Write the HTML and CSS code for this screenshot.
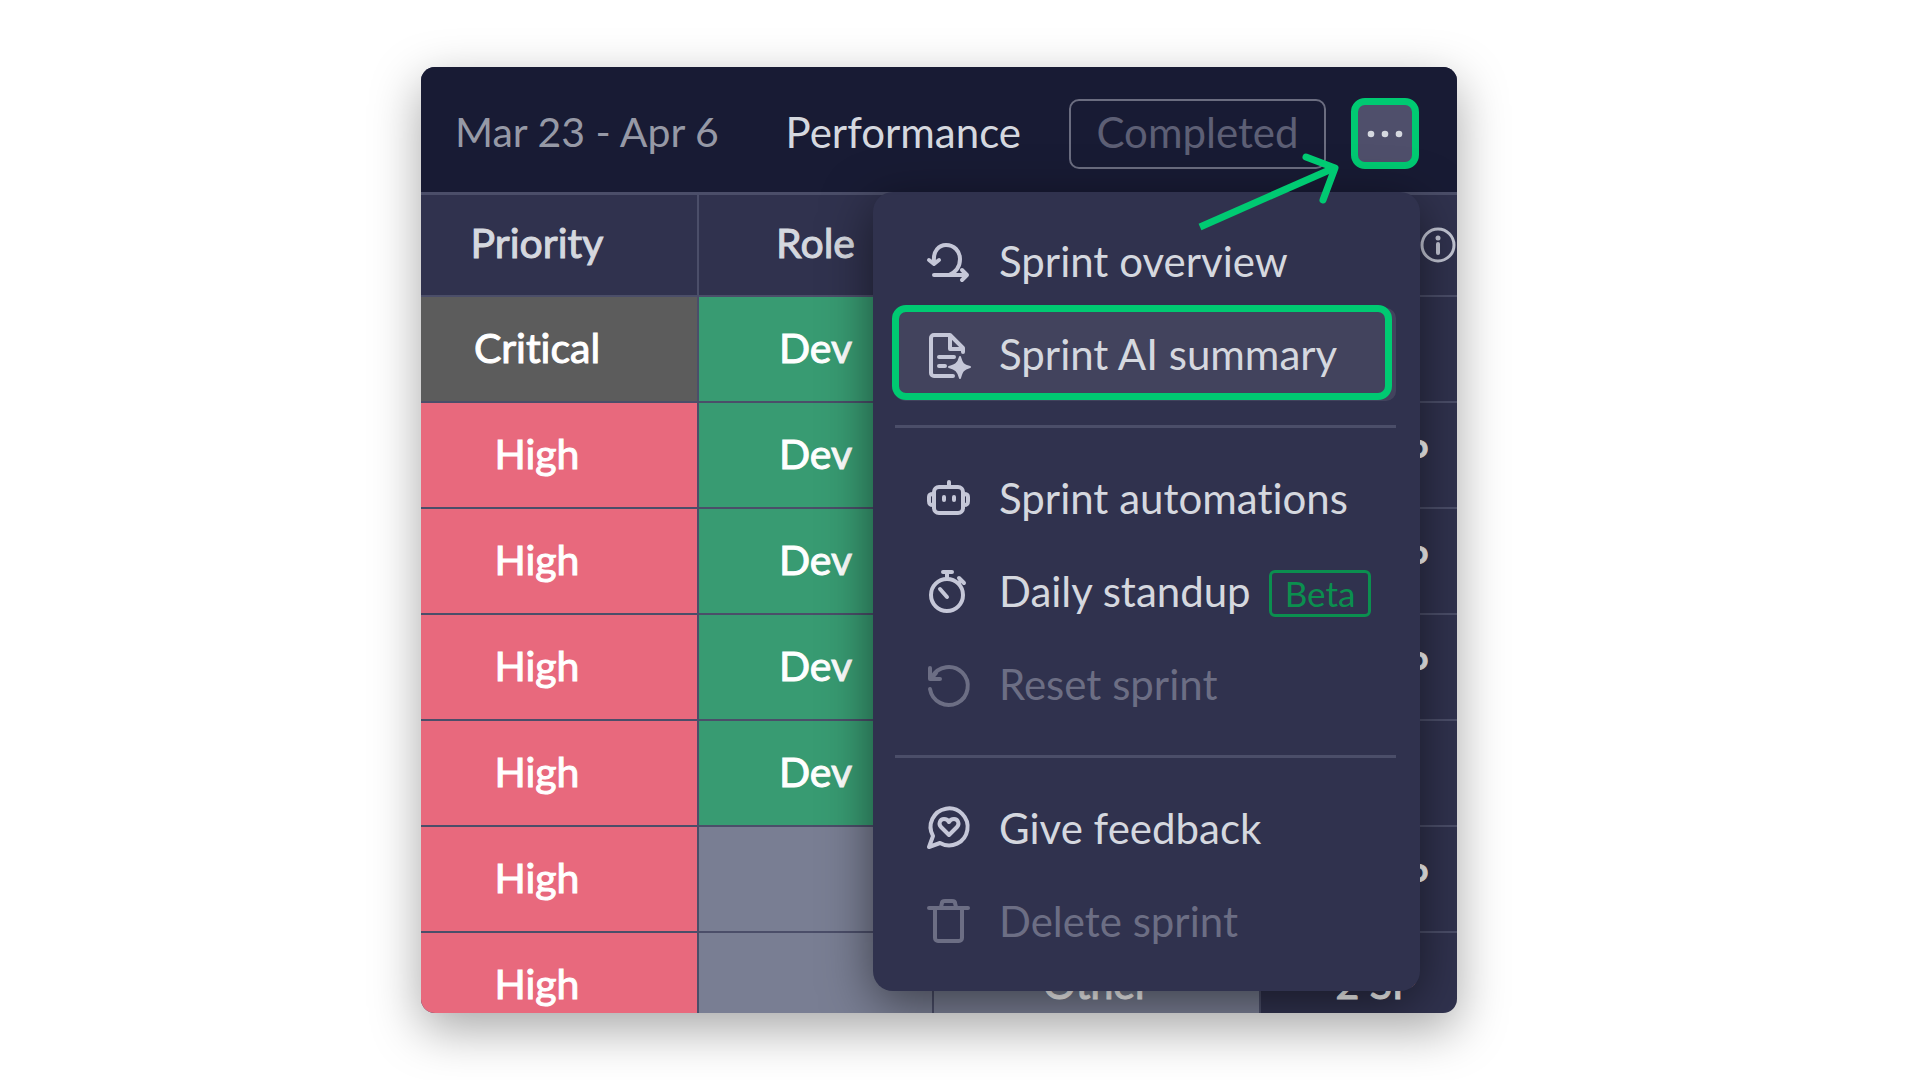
FILE: index.html
```html
<!DOCTYPE html>
<html lang="en">
<head>
    <meta charset="UTF-8">
    <meta name="viewport" content="width=device-width, initial-scale=1.0">
    <title>Sprint menu</title>
    <link rel="stylesheet" href="styles.css">
</head>
<body>
    <main class="card">
        <header class="topbar">
            <span class="dates">Mar 23 - Apr 6</span>
            <a href="#" class="performance">Performance</a>
            <button type="button" class="completed-btn" disabled>Completed</button>
            <button type="button" class="more-btn" id="moreBtn" aria-label="More options" aria-expanded="true" aria-controls="sprintMenu">
                <svg width="36" height="10" viewBox="0 0 36 10" fill="currentColor">
                    <circle cx="4" cy="5" r="3.300"/>
                    <circle cx="18" cy="5" r="3.300"/>
                    <circle cx="32" cy="5" r="3.300"/>
                </svg>
            </button>
        </header>

        <table class="board">
            <colgroup>
                <col class="col-priority">
                <col class="col-role">
                <col class="col-type">
                <col class="col-points">
            </colgroup>
            <thead>
                <tr>
                    <th class="priority">Priority</th>
                    <th>Role</th>
                    <th></th>
                    <th class="points">
                        <svg class="info" width="36" height="36" viewBox="0 0 36 36" fill="none" stroke="currentColor" stroke-width="3">
                            <circle cx="18" cy="18" r="16"/>
                            <path d="M18 17v9" stroke-width="4" stroke-linecap="round"/>
                            <circle cx="18" cy="11" r="2.500" fill="currentColor" stroke="none"/>
                        </svg>
                    </th>
                </tr>
            </thead>
            <tbody>
                <tr><td class="priority critical">Critical</td><td class="dev">Dev</td><td class="other"></td><td></td></tr>
                <tr><td class="priority high">High</td><td class="dev">Dev</td><td class="other"></td><td>13 SP</td></tr>
                <tr><td class="priority high">High</td><td class="dev">Dev</td><td class="other"></td><td>13 SP</td></tr>
                <tr><td class="priority high">High</td><td class="dev">Dev</td><td class="other"></td><td>20 SP</td></tr>
                <tr><td class="priority high">High</td><td class="dev">Dev</td><td class="other"></td><td></td></tr>
                <tr><td class="priority high">High</td><td class="other"></td><td class="other"></td><td>20 SP</td></tr>
                <tr><td class="priority high">High</td><td class="other"></td><td class="other">Other</td><td>2 SP</td></tr>
            </tbody>
        </table>

        <!-- Sprint menu -->
        <nav class="menu" id="sprintMenu">
            <button type="button" class="menu-item">
                <svg class="icon" viewBox="0 0 42 42" fill="none" stroke="currentColor" stroke-width="4" stroke-linecap="round" stroke-linejoin="round">
                    <path d="M7 21C6 11 12 5 19 5c8 0 14 6 14 14 0 7-4 13-11 16"/>
                    <path d="M2 20l5 4 5-4"/>
                    <path d="M7 35h32M35 30l5 5-5 5"/>
                </svg>
                <span>Sprint overview</span>
            </button>
            <button type="button" class="menu-item active">
                <svg class="icon" viewBox="0 0 42 42" fill="none" stroke="currentColor" stroke-width="4" stroke-linecap="round" stroke-linejoin="round">
                    <path d="M26 43H7a3 3 0 0 1-3-3V5a3 3 0 0 1 3-3h16l13 13v4"/>
                    <path d="M23 3v13h12"/>
                    <path d="M12 24h15M12 33h6"/>
                    <path d="M33 24c2 7 3 8 10 10-7 2-8 4-10 11-2-7-4-9-11-11 7-2 9-3 11-10z" fill="currentColor" stroke-width="2"/>
                </svg>
                <span>Sprint AI summary</span>
            </button>
            <hr class="divider">
            <button type="button" class="menu-item">
                <svg class="icon" viewBox="0 0 42 42" fill="none" stroke="currentColor" stroke-width="4" stroke-linecap="round" stroke-linejoin="round">
                    <rect x="7" y="10" width="29" height="26" rx="5"/>
                    <path d="M22 5v4M17 20v3M27 20v3"/>
                    <path d="M6 17c-3 0-4 1-4 3v4c0 3 1 4 4 4M37 17c3 0 4 1 4 3v4c0 3-1 4-4 4"/>
                </svg>
                <span>Sprint automations</span>
            </button>
            <button type="button" class="menu-item">
                <svg class="icon" viewBox="0 0 42 42" fill="none" stroke="currentColor" stroke-width="4" stroke-linecap="round" stroke-linejoin="round">
                    <circle cx="20" cy="25" r="16"/>
                    <path d="M16 2h9M20 2v6M13 19l7 8"/>
                    <path d="M32 8l5 5M34 10l-2 3"/>
                </svg>
                <span>Daily standup</span>
                <span class="beta">Beta</span>
            </button>
            <button type="button" class="menu-item" disabled>
                <svg class="icon" viewBox="0 0 42 42" fill="none" stroke="currentColor" stroke-width="4" stroke-linecap="round" stroke-linejoin="round">
                    <path d="M3 26A19 19 0 1 0 5 14"/>
                    <path d="M3 5v11h10M4 16l5-6"/>
                </svg>
                <span>Reset sprint</span>
            </button>
            <hr class="divider">
            <button type="button" class="menu-item">
                <svg class="icon" viewBox="0 0 42 42" fill="none" stroke="currentColor" stroke-width="4" stroke-linecap="round" stroke-linejoin="round">
                    <path d="M6 29A18.500 18.500 0 1 1 13 36L2 40z"/>
                    <path d="M22 28l-8-8c-3-3-1-8 3-8 2 0 4 1 5 3 1-2 3-3 5-3 4 0 6 5 3 8z"/>
                </svg>
                <span>Give feedback</span>
            </button>
            <button type="button" class="menu-item" disabled>
                <svg class="icon" viewBox="0 0 42 42" fill="none" stroke="currentColor" stroke-width="4" stroke-linecap="round" stroke-linejoin="round">
                    <path d="M2 8h39M8 8v30a3 3 0 0 0 3 3h21a3 3 0 0 0 3-3V8"/>
                    <path d="M14 7l1-4c0-1 1-2 3-2h7c2 0 3 1 3 2l1 4"/>
                </svg>
                <span>Delete sprint</span>
            </button>
        </nav>

        <svg class="arrow" width="148" height="84" viewBox="0 0 148 84" fill="none" stroke="currentColor" stroke-width="7">
            <path d="M7 77L141 18"/>
            <path d="M113 7l29 11-12 32" stroke-linecap="round" stroke-linejoin="round"/>
        </svg>
    </main>

    <script>
        document.getElementById('moreBtn').addEventListener('click', function() {
            const menu = document.getElementById('sprintMenu');
            menu.hidden = !menu.hidden;
            this.setAttribute('aria-expanded', !menu.hidden);
        });
    </script>
</body>
</html>
```

FILE: styles.css
```css
* {
    box-sizing: border-box;
}
body {
    margin: 0;
    padding: 67px 463px 67px 421px;
    min-height: 100vh;
    background: #fff;
    font-family: Lato, "Open Sans", sans-serif;
    font-size: 42px;
    font-variant-ligatures: none;
    line-height: 48px;
    color: #d5d8df;
}
button {
    font: inherit;
    font-variant-ligatures: none;
    color: inherit;
    cursor: pointer;
}
button:disabled {
    cursor: default;
}
.card {
    position: relative;
    height: calc(100vh - 134px);
    overflow: hidden;
    border-radius: 14px;
    background: #30324e;
    box-shadow: 0 16px 50px rgba(0, 0, 0, 0.35);
}
.topbar {
    display: flex;
    align-items: center;
    height: 128px;
    padding: 8px 38px 0 34px;
    background: #181b34;
    border-bottom: 3px solid #4b4e69;
    white-space: nowrap;
}
.dates {
    padding-bottom: 4px;
    color: #9699a6;
    font-size: 41px;
}
.performance {
    margin-left: auto;
    padding-bottom: 4px;
    color: #d5d8df;
    text-decoration: none;
}
.completed-btn {
    width: 257px;
    height: 70px;
    margin: 0 25px 0 48px;
    padding: 0 0 4px;
    background: transparent;
    border: 2px solid #6b6d80;
    border-radius: 10px;
    color: #5d5f75;
}
.more-btn {
    display: flex;
    align-items: center;
    justify-content: center;
    width: 68px;
    height: 71px;
    padding: 0;
    background: #4f4f6b;
    border: 7px solid #00ca72;
    border-radius: 14px;
}

/* Board */
.board {
    width: 1072px;
    table-layout: fixed;
    border-collapse: separate;
    border-spacing: 0;
    text-align: center;
    font-size: 41px;
    -webkit-text-stroke: 1px currentColor;
}
.col-priority {
    width: 278px;
}
.col-role {
    width: 235px;
}
.col-type {
    width: 327px;
}
.col-points {
    width: 232px;
}
.board th,
.board td {
    height: 106px;
    padding: 0 0 2px;
    border-right: 2px solid #4b4e69;
    border-bottom: 2px solid #4b4e69;
}
.board th {
    height: 102px;
    padding-bottom: 4px;
    font-weight: 400;
}
.board td {
    color: #fff;
}
.board .priority {
    padding-right: 44px;
}
.board .points {
    padding: 0 0 0 159px;
}
.info {
    display: block;
    color: #c3c6d4;
}
.critical {
    background: #5c5c5c;
}
.high {
    background: #e8697d;
}
.dev {
    background: #389b72;
}
.other {
    background: #797e93;
}

/* Menu */
.menu {
    position: absolute;
    top: 125px;
    right: 37px;
    width: 547px;
    padding: 23px 24px 23px 22px;
    background: #30324e;
    border-radius: 20px;
    box-shadow: 0 12px 50px rgba(0, 0, 0, 0.5);
}
.menu-item {
    position: relative;
    display: flex;
    align-items: center;
    width: 100%;
    height: 93px;
    padding: 0 0 2px 32px;
    background: transparent;
    border: none;
    border-radius: 10px;
    text-align: left;
    white-space: nowrap;
}
.menu-item:disabled {
    color: #6c6e84;
}
.menu-item.active {
    background: #42435d;
}
.menu-item.active::after {
    content: '';
    position: absolute;
    inset: -3px 4px 1px -3px;
    border: 7px solid #00ca72;
    border-radius: 14px;
}
.icon {
    width: 42px;
    height: 42px;
    margin-right: 30px;
    overflow: visible;
    color: #c5c7d8;
}
.menu-item:disabled .icon {
    color: #6c6e84;
}
.divider {
    height: 3px;
    margin: 24px 0;
    background: #4b4e69;
    border: none;
}
.beta {
    margin: 6px 0 0 18px;
    padding: 0 13px;
    border: 3px solid #0b8f4f;
    border-radius: 6px;
    color: #0b8f4f;
    font-size: 35px;
    line-height: 41px;
}
.arrow {
    position: absolute;
    top: 83px;
    right: 116px;
    color: #00ca72;
    pointer-events: none;
}

@media (max-width: 1800px) {
    body {
        padding-left: 24px;
        padding-right: 24px;
    }
}
```
